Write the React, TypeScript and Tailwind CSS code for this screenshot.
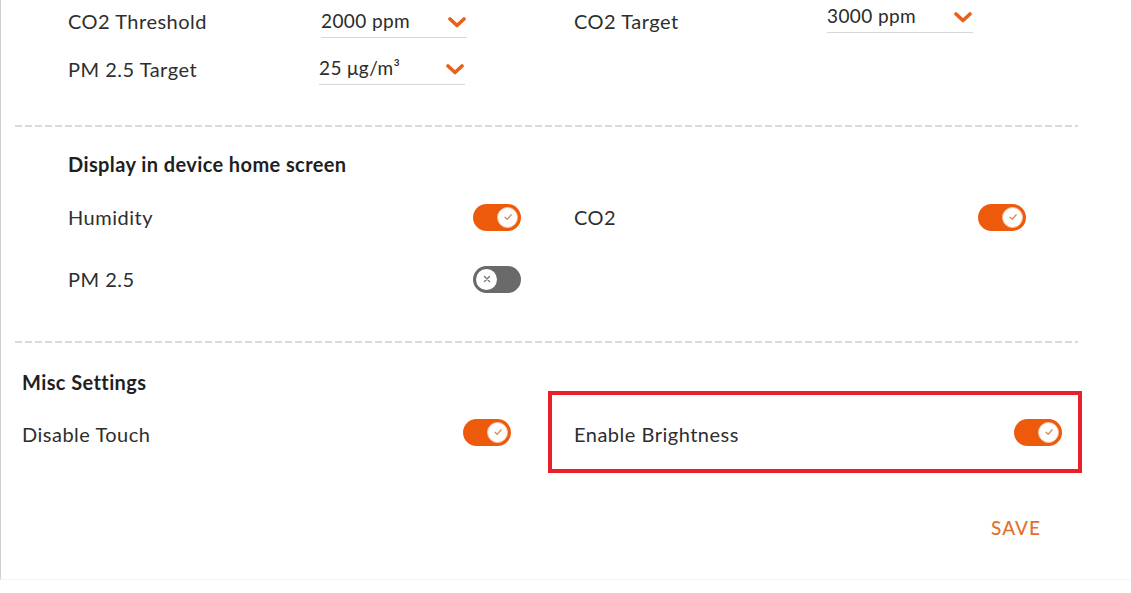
import React from "react";

const font = { fontFamily: "Lato, 'Open Sans', sans-serif" };

function Chevron() {
  return (
    <svg width="18" height="11" viewBox="0 0 18 11" className="shrink-0">
      <path d="M2 2 L9 8.5 L16 2" fill="none" stroke="#e8601a" strokeWidth="3.6" strokeLinecap="round" strokeLinejoin="round" />
    </svg>
  );
}

function Dropdown({ value, className = "" }: { value: React.ReactNode; className?: string }) {
  return (
    <div className={`w-[146px] flex items-center justify-between border-b border-[#d6d6d6] pb-[5px] ${className}`}>
      <span className="text-[19px] text-[#2b2b2b] leading-[22px] tracking-[0.4px]">{value}</span>
      <span className="mr-[1px] mt-[3px]"><Chevron /></span>
    </div>
  );
}

function Toggle({ on = true }: { on?: boolean }) {
  if (on) {
    return (
      <div className="w-[48px] h-[27px] rounded-full bg-[#ee5a0c] flex items-center justify-end pr-[3px] shrink-0">
        <div className="w-[21px] h-[21px] rounded-full bg-white flex items-center justify-center border border-[#f7c6a6]">
          <svg width="10" height="10" viewBox="0 0 10 10">
            <path d="M2 5.2 L4.2 7.3 L8.2 2.8" fill="none" stroke="#d98a60" strokeWidth="1.3" strokeLinecap="round" strokeLinejoin="round" />
          </svg>
        </div>
      </div>
    );
  }
  return (
    <div className="w-[48px] h-[27px] rounded-full bg-[#6a6a6a] flex items-center justify-start pl-[3px] shrink-0">
      <div className="w-[21px] h-[21px] rounded-full bg-white flex items-center justify-center">
        <svg width="10" height="10" viewBox="0 0 10 10">
          <path d="M2.5 2.5 L7.5 7.5 M7.5 2.5 L2.5 7.5" fill="none" stroke="#777" strokeWidth="1.4" strokeLinecap="round" />
        </svg>
      </div>
    </div>
  );
}

function Divider() {
  return (
    <div className="ml-[14px] w-[1063px] h-[2px] bg-[repeating-linear-gradient(90deg,#dadada_0_7px,transparent_7px_10px)]" />
  );
}

export default function App() {
  return (
    <div style={font} className="w-[1131px] h-[593px] bg-white text-[#2e2e2e] overflow-hidden">
      <div className="h-[580px] border-l border-[#cfcfcf] border-b border-b-[#f4f4f4] flex flex-col">
        {/* Thresholds */}
        <div className="pl-[67px] pt-[8px] flex flex-col">
          <div className="flex h-[38px]">
            <div className="w-[506px] flex items-start">
              <span className="w-[253px] text-[20px] leading-[26px] tracking-[0.5px]">CO2 Threshold</span>
              <Dropdown value="2000 ppm" className="mt-[2px]" />
            </div>
            <div className="flex items-start">
              <span className="w-[253px] text-[20px] leading-[26px] tracking-[0.5px]">CO2 Target</span>
              <Dropdown value="3000 ppm" className="-mt-[3px]" />
            </div>
          </div>
          <div className="flex h-[46px] items-start pt-[10px]">
            <span className="w-[251px] text-[20px] leading-[26px] tracking-[0.5px]">PM 2.5 Target</span>
            <Dropdown value={<>25 μg/m³</>} className="mt-[1px]" />
          </div>
        </div>

        <div className="mt-[33px]"><Divider /></div>

        {/* Display in device home screen */}
        <div className="pl-[67px] flex flex-col">
          <div className="mt-[25px] text-[20px] font-bold leading-[24px] text-[#1f1f1f] tracking-[0.4px]">Display in device home screen</div>
          <div className="flex mt-[27px] h-[28px] items-center">
            <div className="w-[506px] flex items-center">
              <span className="w-[405px] text-[20px] tracking-[0.5px]">Humidity</span>
              <Toggle />
            </div>
            <div className="flex items-center">
              <span className="w-[404px] text-[20px] tracking-[0.5px]">CO2</span>
              <Toggle />
            </div>
          </div>
          <div className="flex mt-[34px] h-[28px] items-center">
            <span className="w-[405px] text-[20px] tracking-[0.5px]">PM 2.5</span>
            <Toggle on={false} />
          </div>
        </div>

        <div className="mt-[48px]"><Divider /></div>

        {/* Misc */}
        <div className="pl-[21px] flex flex-col">
          <div className="mt-[27px] text-[20px] font-bold leading-[24px] text-[#1f1f1f] tracking-[0.4px]">Misc Settings</div>
          <div className="flex items-center mt-[-3px]">
            <div className="w-[526px] flex items-center">
              <span className="w-[441px] text-[20px] tracking-[0.5px] mt-[3px]">Disable Touch</span>
              <Toggle />
            </div>
            <div className="w-[534px] h-[82px] border-4 border-[#e8202a] flex items-center pl-[22px] pr-[16px] justify-between">
              <span className="text-[20px] tracking-[0.5px] mt-[3px]">Enable Brightness</span>
              <Toggle />
            </div>
          </div>
        </div>

        <div className="flex justify-end pr-[90px] mt-[41px]">
          <span className="text-[19px] font-medium text-[#e2702e] tracking-[1px]">SAVE</span>
        </div>
      </div>
    </div>
  );
}
